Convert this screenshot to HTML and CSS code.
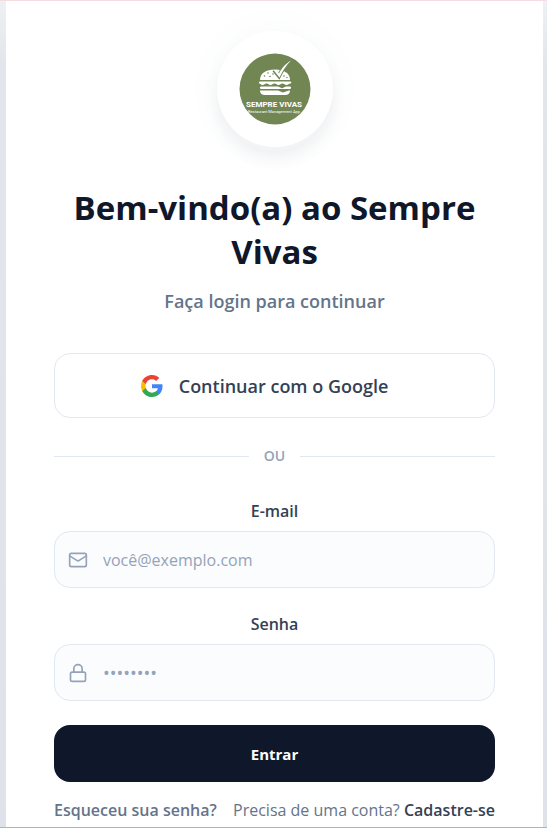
FILE: index.html
```html
<!DOCTYPE html>
<html lang="pt-BR">
<head>
  <meta charset="UTF-8">
  <meta name="viewport" content="width=device-width, initial-scale=1.0">
  <title>Sempre Vivas</title>
  <link rel="stylesheet" href="styles.css">
</head>
<body>
  <main class="card">
    <div class="logo">
      <svg class="logo-img" viewBox="0 0 72 72" role="img" aria-label="Sempre Vivas">
        <circle cx="36" cy="36" r="35.5" fill="#728654"/>
        <g fill="#fff">
          <path d="M21 27c0-7 6-10.500 15-10.500S51 20 51 27z"/>
          <path d="M20.500 28.500h31c1 0 1 2 0 2-2 0-2 1.500-4 1.500s-2-1.500-4-1.500-2 1.500-4 1.500-2-1.500-4-1.500-2 1.500-4 1.500-2-1.500-4-1.500-2 1.500-4 1.500-2-1.500-3-1.500-1-2 1-2z"/>
          <path d="M22 33.500h17l4 1.800 4-1.800h4c1.500 0 1.500 2.500 0 2.500H22c-1.500 0-1.500-2.500 0-2.500z"/>
          <path d="M21 37.500h18l5 2 6-2h1c0 3-2 4.500-5 4.500H26c-3 0-5-1.500-5-4.500z"/>
        </g>
        <path d="M35 17l5 6c3-6 5-10 10-13" fill="none" stroke="#728654" stroke-width="4"/>
        <path d="M34.500 17l3-.500 2.500 4c3-6 6.500-9.500 12-13-5 5-8 10-11.500 17z" fill="#fff"/>
        <g fill="#728654">
          <circle cx="25.500" cy="23" r=".8"/>
          <circle cx="29" cy="20" r=".8"/>
          <circle cx="31" cy="23.500" r=".8"/>
          <circle cx="34" cy="21" r=".8"/>
          <circle cx="45" cy="23" r=".8"/>
          <circle cx="48" cy="24.500" r=".7"/>
        </g>
        <text class="logo-name" x="35" y="54" text-anchor="middle">SEMPRE VIVAS</text>
        <text class="logo-sub" x="35" y="60" text-anchor="middle">Restaurant Management App</text>
      </svg>
    </div>

    <h1 class="title">Bem-vindo(a) ao Sempre Vivas</h1>
    <p class="subtitle">Faça login para continuar</p>

    <button type="button" class="btn-google">
      <svg class="google-icon" viewBox="0 0 24 24" aria-hidden="true">
        <path fill="#4285F4" d="M23.500 12.270c0-.790-.070-1.540-.190-2.270H12v4.510h6.470c-.290 1.480-1.140 2.730-2.400 3.580v3h3.860c2.260-2.090 3.570-5.170 3.570-8.820z"/>
        <path fill="#34A853" d="M12 24c3.240 0 5.950-1.080 7.930-2.910l-3.860-3c-1.080.720-2.450 1.160-4.070 1.160-3.130 0-5.780-2.110-6.730-4.960H1.290v3.090C3.260 21.300 7.310 24 12 24z"/>
        <path fill="#FBBC05" d="M5.270 14.290c-.250-.720-.380-1.490-.380-2.290s.140-1.570.380-2.290V6.620H1.290C.470 8.240 0 10.060 0 12s.470 3.760 1.290 5.380l3.980-3.090z"/>
        <path fill="#EA4335" d="M12 4.750c1.770 0 3.350.610 4.600 1.800l3.420-3.420C17.950 1.190 15.240 0 12 0 7.310 0 3.260 2.700 1.290 6.620l3.980 3.090c.950-2.850 3.600-4.960 6.730-4.960z"/>
      </svg>
      Continuar com o Google
    </button>

    <div class="divider"><span>OU</span></div>

    <form class="login-form">
      <div class="field">
        <label for="email">E-mail</label>
        <div class="input-box">
          <svg class="input-icon" viewBox="0 0 24 24" aria-hidden="true">
            <rect x="2" y="4" width="20" height="16" rx="2"/>
            <path d="M22 7l-9 5.700a2 2 0 0 1-2 0L2 7"/>
          </svg>
          <input type="email" id="email" name="email" placeholder="você@exemplo.com">
        </div>
      </div>

      <div class="field">
        <label for="password">Senha</label>
        <div class="input-box">
          <svg class="input-icon" viewBox="0 0 24 24" aria-hidden="true">
            <rect x="3" y="11" width="18" height="11" rx="2"/>
            <path d="M7 11V7a5 5 0 0 1 10 0v4"/>
          </svg>
          <input type="password" id="password" name="password" placeholder="••••••••">
        </div>
      </div>

      <button type="submit" class="btn-submit">Entrar</button>
    </form>

    <div class="links">
      <a href="#" class="forgot">Esqueceu sua senha?</a>
      <a href="#" class="signup">Precisa de uma conta? <strong>Cadastre-se</strong></a>
    </div>
  </main>
</body>
</html>
```

FILE: styles.css
```css
* {
  box-sizing: border-box;
}

body {
  margin: 0;
  min-height: 100vh;
  padding: 0 4px 0 6px;
  display: flex;
  border-top: 1px solid #f6dbe1;
  border-bottom: 1px solid #aeb2bc;
  background: linear-gradient(#eef0f4, #e2e5e9 8%, #dfe2e8);
  font-family: "Open Sans", "Noto Sans", sans-serif;
  font-size: 16px;
  color: #0f172a;
}

.card {
  flex: 1;
  min-width: 0;
  padding: 30px 48px 0;
  background: #fff;
}

/* logo */
.logo {
  width: 116px;
  height: 116px;
  margin: 0 auto 39px;
  display: flex;
  align-items: center;
  justify-content: center;
  border-radius: 50%;
  background: #fff;
  box-shadow: 0 4px 2px #f3f4f5, 0 10px 20px -4px #e6e9ec, 0 0 48px #f8f9f9;
}

.logo-img {
  width: 72px;
  height: 72px;
}

.logo-name {
  font: bold 8px "Roboto", sans-serif;
  fill: #fff;
}

.logo-sub {
  font: 4px "Roboto", sans-serif;
  fill: #fff;
}

/* heading */
.title {
  margin: 0;
  font-size: 33px;
  line-height: 44px;
  font-weight: 700;
  text-align: center;
}

.subtitle {
  margin: 13px 0 38px;
  font-size: 18px;
  line-height: 28px;
  font-weight: 600;
  text-align: center;
  color: #64748b;
}

.btn-google {
  width: 100%;
  height: 65px;
  padding: 0 24px 0 4px;
  display: flex;
  align-items: center;
  justify-content: center;
  gap: 16px;
  border: 1px solid #e2e8f0;
  border-radius: 16px;
  background: #fff;
  font-family: inherit;
  font-size: 18px;
  font-weight: 600;
  color: #334155;
  cursor: pointer;
}

.google-icon {
  width: 22px;
  height: 22px;
}

.divider {
  margin: 28px 0 33px;
  display: flex;
  align-items: center;
  gap: 15px;
  font-size: 14px;
  line-height: 20px;
  font-weight: 600;
  color: #94a3b8;
}

.divider::before,
.divider::after {
  content: "";
  flex: 1;
  height: 1px;
  background: #e2e8f0;
}

/* form */
.login-form {
  display: flex;
  flex-direction: column;
  gap: 24px;
}

.field label {
  display: block;
  margin-bottom: 8px;
  font-size: 16px;
  line-height: 24px;
  font-weight: 600;
  text-align: center;
  color: #334155;
}

.input-box {
  height: 57px;
  padding: 0 13px;
  display: flex;
  align-items: center;
  gap: 15px;
  border: 1px solid #e2e8f0;
  border-radius: 16px;
  background: #fbfcfe;
}

.input-icon {
  width: 20px;
  height: 20px;
  fill: none;
  stroke: #94a3b8;
  stroke-width: 2;
  stroke-linecap: round;
  stroke-linejoin: round;
}

.input-box input {
  flex: 1;
  min-width: 0;
  padding: 0;
  border: 0;
  outline: 0;
  background: none;
  font-family: inherit;
  font-size: 16px;
  color: #0f172a;
}

.input-box input[type="password"] {
  font-size: 18px;
}

.input-box input::placeholder {
  color: #94a3b8;
}

.btn-submit {
  height: 57px;
  border: 0;
  border-radius: 16px;
  background: #0f172a;
  font-family: inherit;
  font-size: 15px;
  font-weight: 700;
  color: #fff;
  cursor: pointer;
}

.links {
  margin-top: 16px;
  display: flex;
  justify-content: space-between;
  font-size: 16px;
  line-height: 24px;
}

.links a {
  color: #64748b;
  text-decoration: none;
  white-space: nowrap;
}

.links .forgot {
  font-weight: 600;
}

.links strong {
  font-weight: 600;
  color: #334155;
}
```
